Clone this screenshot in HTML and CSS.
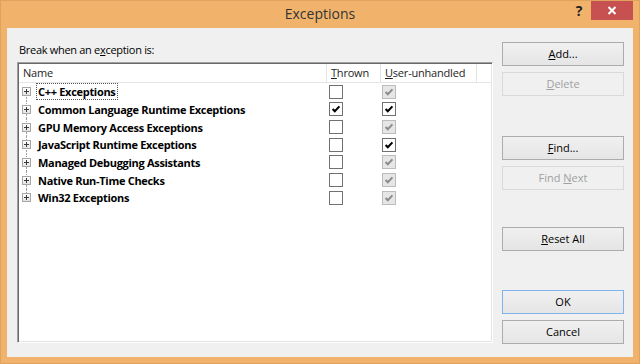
FILE: index.html
```html
<!DOCTYPE html>
<html>
<head>
<meta charset="utf-8">
<link rel="stylesheet" href="styles.css">
</head>
<body>
<div class="window">
  <div class="titlebar">
    <div class="spacer"></div>
    <div class="title">Exceptions</div>
    <div class="controls">
      <div class="help">?</div>
      <div class="close"><svg width="10" height="9" viewBox="0 0 10 9"><path d="M1.5 1 L8.5 8 M8.5 1 L1.5 8" stroke="#fff" stroke-width="2"/></svg></div>
    </div>
  </div>
  <div class="client">
    <div class="left">
      <div class="label">Break when an e<u>x</u>ception is:</div>
      <div class="list">
        <div class="header">
          <div class="hcell name">Name</div>
          <div class="hcell"><u>T</u>hrown</div>
          <div class="hcell"><u>U</u>ser-unhandled</div>
          <div class="hcell filler"></div>
        </div>
        <div class="rows">
          <div class="row first">
            <div class="tree"><span class="exp"></span><span class="text focus">C++ Exceptions</span></div>
            <div class="c1"><span class="cb"></span></div>
            <div class="c2"><span class="cb dis"><svg viewBox="0 0 13 13"><path d="M2.8 6.6 L5.2 9 L10.2 3.6"/></svg></span></div>
          </div>
          <div class="row">
            <div class="tree"><span class="exp"></span><span class="text">Common Language Runtime Exceptions</span></div>
            <div class="c1"><span class="cb"><svg viewBox="0 0 13 13"><path d="M2.8 6.6 L5.2 9 L10.2 3.6"/></svg></span></div>
            <div class="c2"><span class="cb"><svg viewBox="0 0 13 13"><path d="M2.8 6.6 L5.2 9 L10.2 3.6"/></svg></span></div>
          </div>
          <div class="row">
            <div class="tree"><span class="exp"></span><span class="text">GPU Memory Access Exceptions</span></div>
            <div class="c1"><span class="cb"></span></div>
            <div class="c2"><span class="cb dis"><svg viewBox="0 0 13 13"><path d="M2.8 6.6 L5.2 9 L10.2 3.6"/></svg></span></div>
          </div>
          <div class="row">
            <div class="tree"><span class="exp"></span><span class="text">JavaScript Runtime Exceptions</span></div>
            <div class="c1"><span class="cb"></span></div>
            <div class="c2"><span class="cb"><svg viewBox="0 0 13 13"><path d="M2.8 6.6 L5.2 9 L10.2 3.6"/></svg></span></div>
          </div>
          <div class="row">
            <div class="tree"><span class="exp"></span><span class="text">Managed Debugging Assistants</span></div>
            <div class="c1"><span class="cb"></span></div>
            <div class="c2"><span class="cb dis"><svg viewBox="0 0 13 13"><path d="M2.8 6.6 L5.2 9 L10.2 3.6"/></svg></span></div>
          </div>
          <div class="row">
            <div class="tree"><span class="exp"></span><span class="text">Native Run-Time Checks</span></div>
            <div class="c1"><span class="cb"></span></div>
            <div class="c2"><span class="cb dis"><svg viewBox="0 0 13 13"><path d="M2.8 6.6 L5.2 9 L10.2 3.6"/></svg></span></div>
          </div>
          <div class="row last">
            <div class="tree"><span class="exp"></span><span class="text">Win32 Exceptions</span></div>
            <div class="c1"><span class="cb"></span></div>
            <div class="c2"><span class="cb dis"><svg viewBox="0 0 13 13"><path d="M2.8 6.6 L5.2 9 L10.2 3.6"/></svg></span></div>
          </div>
        </div>
      </div>
    </div>
    <div class="buttons">
      <div class="btn"><u>A</u>dd...</div>
      <div class="btn disabled gap-s"><u>D</u>elete</div>
      <div class="btn gap-find"><u>F</u>ind...</div>
      <div class="btn disabled gap-s">Find <u>N</u>ext</div>
      <div class="btn gap-reset"><u>R</u>eset All</div>
      <div class="btn default gap-ok">OK</div>
      <div class="btn gap-s">Cancel</div>
    </div>
  </div>
</div>
</body>
</html>
```

FILE: styles.css
```css
* { box-sizing: border-box; }
html, body { margin: 0; padding: 0; }
body {
  width: 640px;
  height: 364px;
  overflow: hidden;
  font-family: "Segoe UI", "Open Sans", "Noto Sans", sans-serif;
  font-size: 11px;
  color: #000;
}
u { text-decoration: underline; text-underline-offset: 1px; }
.window {
  width: 640px;
  height: 364px;
  background: #f1b36c;
  box-shadow: inset 0 0 0 1px #dfa35e;
  display: flex;
  flex-direction: column;
}
.titlebar {
  height: 28px;
  display: grid;
  grid-template-columns: 1fr auto 1fr;
  align-items: start;
}
.title {
  font-size: 14px;
  color: #333;
  line-height: 28px;
}
.controls {
  justify-self: end;
  display: flex;
  align-items: flex-start;
  padding-right: 7px;
}
.help {
  font-weight: bold;
  font-size: 14px;
  line-height: 22px;
  color: #222;
  width: 16px;
  margin-right: 4px;
  text-align: center;
}
.close {
  width: 42px;
  height: 19px;
  margin-top: 1px;
  background: #c75050;
  display: flex;
  align-items: center;
  justify-content: center;
}
.client {
  flex: 1;
  margin: 0 7px 7px 7px;
  background: #f0f0f0;
  display: flex;
  padding: 0 9px 0 10px;
}
.left {
  width: 476px;
  display: flex;
  flex-direction: column;
}
.label {
  padding-top: 14px;
  padding-left: 2px;
  height: 30px;
  line-height: 16px;
  margin-bottom: 4px;
  letter-spacing: -0.3px;
}
.list {
  height: 281px;
  background: #fff;
  border: 1px solid;
  border-color: #a0a0a0 #ffffff #ffffff #a0a0a0;
  box-shadow: inset 1px 1px 0 #696969, inset -1px -1px 0 #e3e3e3;
  padding: 1px 1px 0 1px;
}
.header {
  display: grid;
  grid-template-columns: 308px 54px 96px 1fr;
  height: 19px;
  border-bottom: 1px solid #e5e5e5;
}
.hcell {
  line-height: 17px;
  padding-left: 4px;
  border-right: 1px solid #e5e5e5;
  color: #1e1e1e;
  white-space: nowrap;
  letter-spacing: -0.2px;
}
.hcell.filler { border-right: none; }
.rows { display: flex; flex-direction: column; }
.row {
  display: grid;
  grid-template-columns: 308px 54px 96px;
  height: 17.67px;
  align-items: center;
  position: relative;
}
.tree {
  display: flex;
  align-items: center;
  padding-left: 3px;
  height: 100%;
  position: relative;
}
.exp {
  width: 9px;
  height: 9px;
  border: 1px solid #a6a6a6;
  background: linear-gradient(#ffffff, #e4e4e4);
  position: relative;
  margin-right: 5px;
  flex: none;
}
.exp::before {
  content: "";
  position: absolute;
  left: 1px; top: 3px;
  width: 5px; height: 1px;
  background: #3a3a3a;
}
.exp::after {
  content: "";
  position: absolute;
  left: 3px; top: 1px;
  width: 1px; height: 5px;
  background: #3a3a3a;
}
.tree::before, .tree::after {
  content: "";
  position: absolute;
  left: 7px;
  border-left: 1px dotted #a0a0a0;
}
.tree::before { top: 0; height: calc(50% - 5px); }
.tree::after { bottom: 0; height: calc(50% - 5px); }
.row.first .tree::before { display: none; }
.row.last .tree::after { display: none; }
.text {
  font-weight: bold;
  white-space: nowrap;
  padding: 0 1px;
  border: 1px solid transparent;
  line-height: 15px;
  letter-spacing: -0.3px;
}
.text.focus { border: 1px dotted #555; }
.c1 { padding-left: 2px; display: flex; }
.c2 { padding-left: 1px; display: flex; }
.cb {
  width: 14px;
  height: 14px;
  border: 1px solid #707070;
  background: #fff;
  display: flex;
  align-items: center;
  justify-content: center;
}
.cb svg { width: 12px; height: 12px; }
.cb svg path { fill: none; stroke: #000; stroke-width: 2.2; }
.cb.dis { background: #e6e6e6; border-color: #bcbcbc; }
.cb.dis svg path { stroke: #8c8c8c; }
.buttons {
  width: 122px;
  margin-left: 9px;
  padding-top: 14px;
  display: flex;
  flex-direction: column;
}
.btn {
  height: 24px;
  border: 1px solid #acacac;
  background: linear-gradient(#f0f0f0, #e5e5e5);
  text-align: center;
  line-height: 21px;
  color: #000;
}
.btn.disabled {
  border-color: #d9d9d9;
  background: #f0f0f0;
  color: #a0a0a0;
}
.btn.default { border-color: #7eb4ea; }
.gap-s { margin-top: 6px; }
.gap-find { margin-top: 40px; }
.gap-reset { margin-top: 37px; }
.gap-ok { margin-top: 39px; }
```
